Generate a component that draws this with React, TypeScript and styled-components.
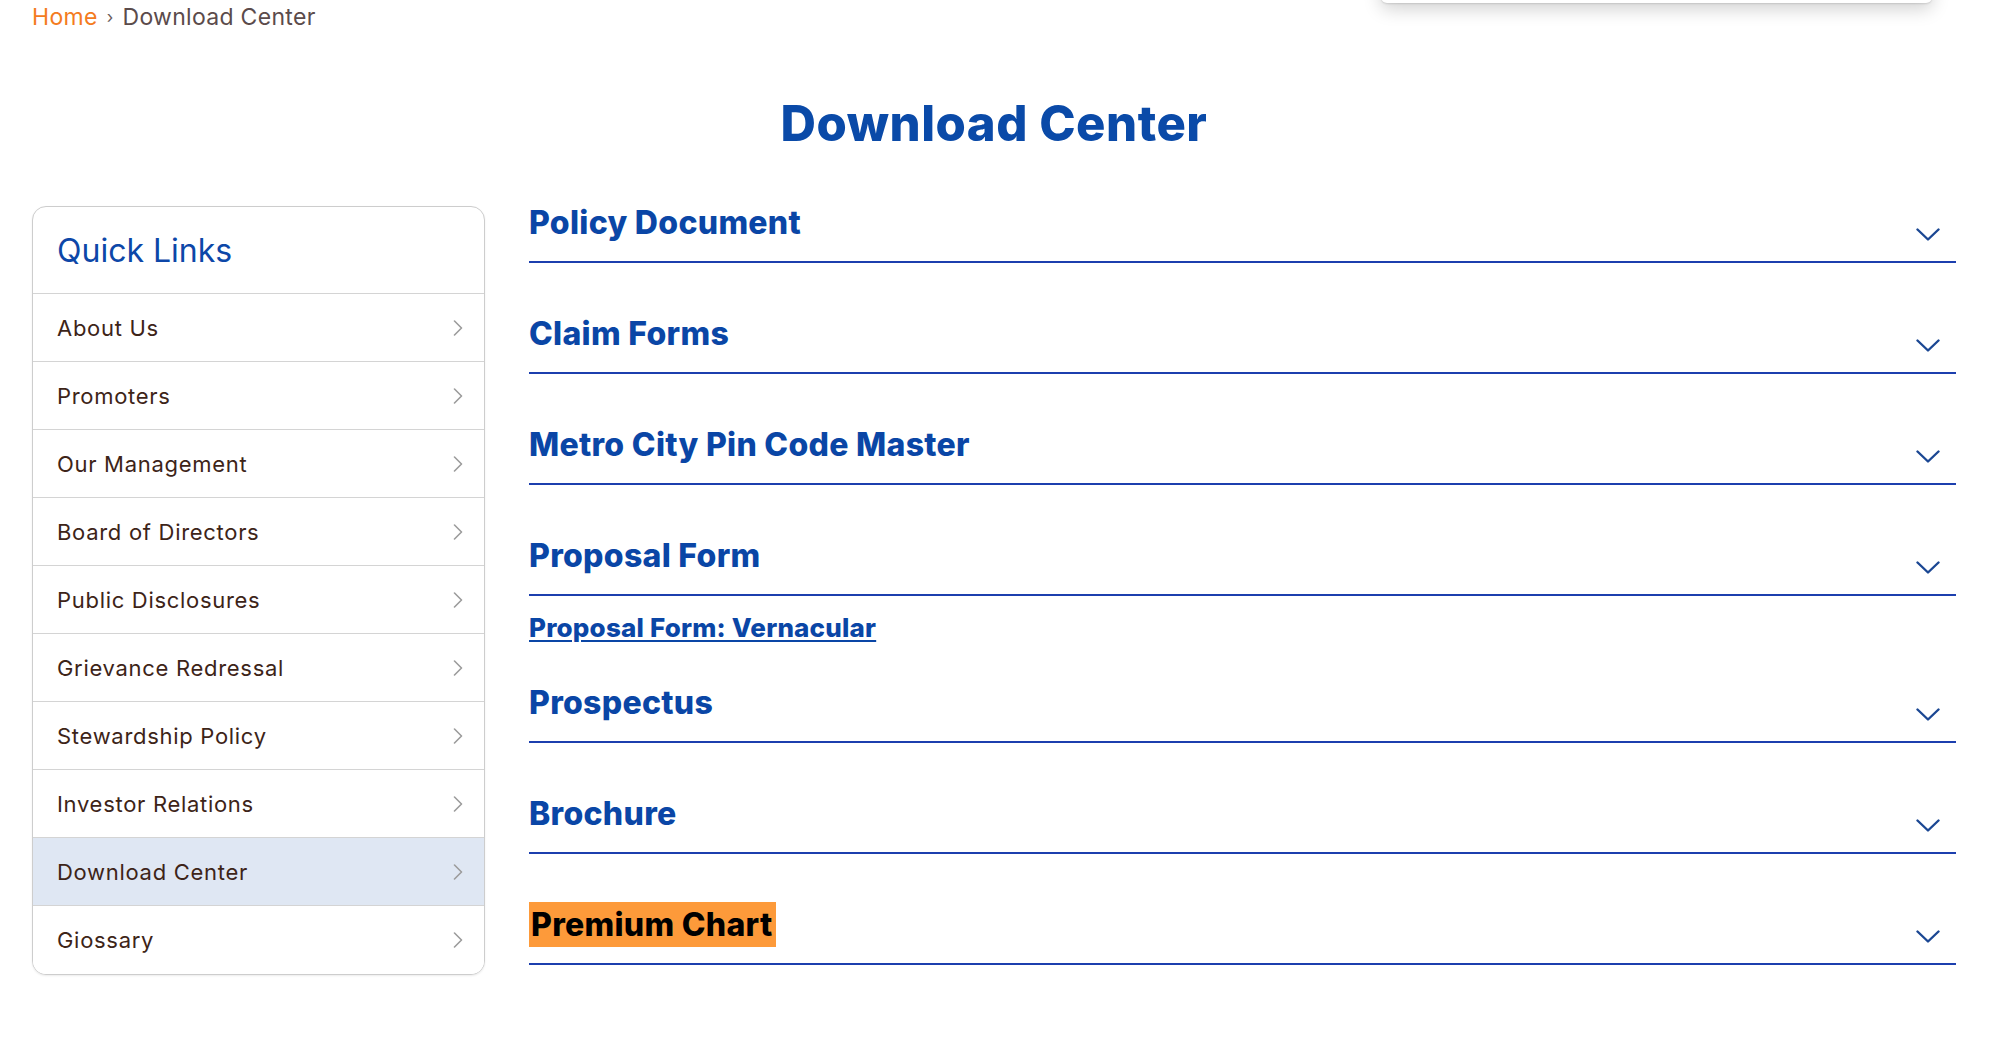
import React from "react";
import styled, { createGlobalStyle } from "styled-components";

const GlobalStyle = createGlobalStyle`
  html, body { margin: 0; padding: 0; background: #ffffff; }
  body { font-family: "Inter", "Liberation Sans", sans-serif; overflow: hidden; }
  * { box-sizing: border-box; }
`;

const Page = styled.div`
  position: relative;
  width: 2000px;
  min-height: 1043px;
  padding: 3px 44px 60px 32px;
`;

const FloatingMenu = styled.div`
  position: absolute;
  top: -200px;
  left: 1381px;
  width: 551px;
  height: 203px;
  background: #ffffff;
  border-radius: 6px;
  box-shadow: 0 6px 18px rgba(0, 0, 0, 0.18), 0 1px 2px rgba(0, 0, 0, 0.12);
`;

const Breadcrumb = styled.nav`
  display: flex;
  align-items: center;
  gap: 9px;
  height: 28px;
  font-size: 23px;
  line-height: 28px;
  letter-spacing: 0.3px;
  color: #5b4b4b;
`;

const Crumb = styled.a<{ $active?: boolean }>`
  color: ${(p) => (p.$active ? "#f47b20" : "#5b4b4b")};
  text-decoration: none;
`;

const Sep = styled.span`
  font-size: 17px;
  color: #6b5b5b;
`;

const Title = styled.h1`
  margin: 64px 0 53px;
  text-align: center;
  font-size: 49px;
  line-height: 58px;
  font-weight: 800;
  color: #0a4aa8;
  letter-spacing: 0.5px;
`;

const Content = styled.div`
  display: grid;
  grid-template-columns: 453px 1fr;
  gap: 44px;
  align-items: start;
`;

const Card = styled.aside`
  border: 1px solid #cdcdcd;
  border-radius: 14px;
  overflow: hidden;
  background: #fff;
  box-shadow: 0 1px 2px rgba(0, 0, 0, 0.08);
`;

const CardHeader = styled.div`
  display: flex;
  align-items: center;
  height: 87px;
  padding: 0 24px;
  border-bottom: 1px solid #d4d4d4;
  font-size: 32px;
  font-weight: 400;
  color: #0d47a8;
`;

const LinkRow = styled.a<{ $active?: boolean }>`
  display: flex;
  align-items: center;
  justify-content: space-between;
  height: 68px;
  padding: 0 21px 0 24px;
  border-bottom: 1px solid #d4d4d4;
  background: ${(p) => (p.$active ? "#dfe7f3" : "#ffffff")};
  color: #3d2418;
  font-size: 22px;
  letter-spacing: 0.7px;
  text-decoration: none;
  &:last-child { border-bottom: none; }
`;

const Accordion = styled.div`
  display: flex;
  flex-direction: column;
  padding-top: 1px;
`;

const Item = styled.section`
  margin-bottom: 55px;
`;

const Header = styled.div`
  display: flex;
  align-items: flex-end;
  justify-content: space-between;
  padding: 0 16px 22px 0;
  border-bottom: 2px solid #1c3fae;
`;

const Heading = styled.h3`
  margin: 0;
  font-size: 32px;
  line-height: 32px;
  font-weight: 800;
  letter-spacing: 0.3px;
  color: #0a46a6;
`;

const Mark = styled.span`
  background: #fd9a3a;
  color: #000;
  padding: 3px 3px 3px 2px;
`;

const Chevron = styled.svg`
  flex: none;
  margin-bottom: -2px;
`;

const Body = styled.div`
  padding-top: 19px;
  margin-bottom: -9px;
`;

const DocLink = styled.a`
  font-size: 26px;
  line-height: 26px;
  font-weight: 800;
  letter-spacing: 0.2px;
  color: #0a46a6;
  text-decoration: underline;
  text-underline-offset: 3px;
  text-decoration-thickness: 2px;
`;

const RowArrow = () => (
  <svg width="10" height="16" viewBox="0 0 10 16" fill="none">
    <polyline points="1.5,1 8.5,8 1.5,15" stroke="#9c9c9c" strokeWidth="1.6" strokeLinecap="round" strokeLinejoin="round" />
  </svg>
);

const DownArrow = () => (
  <Chevron width="24" height="13" viewBox="0 0 24 13" fill="none">
    <polyline points="1.5,1.5 12,11.5 22.5,1.5" stroke="#1b4793" strokeWidth="2.4" strokeLinecap="round" strokeLinejoin="round" />
  </Chevron>
);

const quickLinks = [
  "About Us",
  "Promoters",
  "Our Management",
  "Board of Directors",
  "Public Disclosures",
  "Grievance Redressal",
  "Stewardship Policy",
  "Investor Relations",
  "Download Center",
  "Giossary",
];

type Section = { title: string; highlight?: boolean; links?: string[] };

const sections: Section[] = [
  { title: "Policy Document" },
  { title: "Claim Forms" },
  { title: "Metro City Pin Code Master" },
  { title: "Proposal Form", links: ["Proposal Form: Vernacular"] },
  { title: "Prospectus" },
  { title: "Brochure" },
  { title: "Premium Chart", highlight: true },
];

export default function App() {
  return (
    <>
      <GlobalStyle />
      <Page>
        <FloatingMenu />
        <Breadcrumb>
          <Crumb $active href="#">Home</Crumb>
          <Sep>›</Sep>
          <Crumb href="#">Download Center</Crumb>
        </Breadcrumb>
        <Title>Download Center</Title>
        <Content>
          <Card>
            <CardHeader>Quick Links</CardHeader>
            {quickLinks.map((l) => (
              <LinkRow key={l} href="#" $active={l === "Download Center"}>
                <span>{l}</span>
                <RowArrow />
              </LinkRow>
            ))}
          </Card>
          <Accordion>
            {sections.map((s) => (
              <Item key={s.title}>
                <Header>
                  <Heading>{s.highlight ? <Mark>{s.title}</Mark> : s.title}</Heading>
                  <DownArrow />
                </Header>
                {s.links && (
                  <Body>
                    {s.links.map((l) => (
                      <DocLink key={l} href="#">{l}</DocLink>
                    ))}
                  </Body>
                )}
              </Item>
            ))}
          </Accordion>
        </Content>
      </Page>
    </>
  );
}
